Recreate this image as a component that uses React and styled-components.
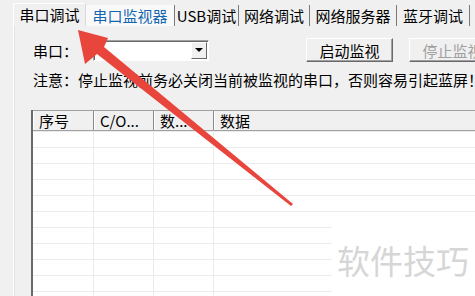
import React from 'react';
import styled, { createGlobalStyle } from 'styled-components';

const GlobalStyle = createGlobalStyle`
  body {
    margin: 0;
    background: #f0f0f0;
    font-family: "Noto Sans CJK SC", "Noto Sans", sans-serif;
  }
`;

const Window = styled.div`
  position: relative;
  width: 475px;
  height: 296px;
  overflow: hidden;
  background: #f0f0f0;
  font-size: 15px;
  color: #000;
`;

const TabStrip = styled.div`
  display: flex;
  align-items: flex-end;
  height: 26px;
  padding-left: 13px;
  white-space: nowrap;
`;

const Tab = styled.div`
  flex: none;
  box-sizing: border-box;
  width: ${props => props.w}px;
  height: ${props => props.active ? 23 : 21}px;
  display: flex;
  align-items: center;
  justify-content: center;
  line-height: 1;
  color: ${props => props.hover ? '#1466b0' : '#000'};
  background: ${props => props.active ? '#f0f0f0' : props.hover ? '#f9f9f9' : 'transparent'};
  border-left: ${props => props.active ? '1px solid #fff' : 'none'};
  border-top: ${props => props.active ? '1px solid #fff' : 'none'};
  border-right: 1px solid ${props => props.active ? '#d8d8d8' : '#7a7a7a'};
  padding-bottom: ${props => props.active ? 2 : 0}px;
`;

const Panel = styled.div`
  margin-left: 13px;
  height: 270px;
  border-left: 1px solid #fff;
  box-shadow: inset 1px 0 0 #e2e2e2;
  padding: 12px 0 0 17px;
  box-sizing: border-box;
`;

const Row = styled.div`
  display: flex;
  align-items: center;
  height: 24px;
  padding-left: 2px;
  white-space: nowrap;
`;

const Label = styled.span`
  width: 60px;
  flex: none;
`;

const Combo = styled.div`
  display: flex;
  box-sizing: border-box;
  width: 116px;
  height: 21px;
  background: #fff;
  border-top: 1px solid #a0a0a0;
  border-left: 1px solid #a0a0a0;
  border-bottom: 1px solid #fff;
  border-right: 1px solid #fff;
  box-shadow: inset 1px 1px 0 #696969;
  flex: none;
`;

const ComboField = styled.div`
  flex: 1;
`;

const DropButton = styled.div`
  width: 16px;
  margin: 1px 1px 1px 0;
  box-sizing: border-box;
  background: #f0f0f0;
  border-top: 1px solid #fff;
  border-left: 1px solid #fff;
  border-right: 1px solid #696969;
  border-bottom: 1px solid #696969;
  display: flex;
  align-items: center;
  justify-content: center;

  &::after {
    content: '';
    border-left: 4px solid transparent;
    border-right: 4px solid transparent;
    border-top: 4px solid #000;
  }
`;

const Button = styled.div`
  flex: none;
  box-sizing: border-box;
  width: 87px;
  height: 24px;
  margin-left: ${props => props.gap}px;
  display: flex;
  align-items: center;
  justify-content: center;
  background: #f0f0f0;
  color: ${props => props.disabled ? '#a0a0a0' : '#000'};
  border-top: 1px solid #fff;
  border-left: 1px solid #fff;
  border-right: 1px solid #696969;
  border-bottom: 1px solid #696969;
  box-shadow: inset -1px -1px 0 #a0a0a0;
`;

const Notice = styled.div`
  margin-top: 8px;
  padding-left: 2px;
  height: 20px;
  line-height: 20px;
  white-space: nowrap;
`;

const Table = styled.div`
  margin-top: 20px;
  width: 460px;
  border-left: 2px solid #6a6a6a;
  background: #fff;
  height: 200px;
`;

const Header = styled.div`
  display: flex;
  height: 21px;
  box-sizing: border-box;
  border-top: 1px solid #a0a0a0;
  border-bottom: 1px solid #a0a0a0;
  background: #f0f0f0;
`;

const HeadCell = styled.div`
  flex: none;
  box-sizing: border-box;
  width: ${props => props.w ? `${props.w}px` : 'auto'};
  flex-grow: ${props => props.w ? 0 : 1};
  padding-left: 5px;
  line-height: 19px;
  border-left: 1px solid #fff;
  border-right: 1px solid #8a8a8a;
  white-space: nowrap;
  overflow: hidden;
`;

const BodyRow = styled.div`
  display: flex;
  height: 16px;
  box-sizing: border-box;
  border-top: 1px solid #ebebeb;
`;

const Cell = styled.div`
  flex: none;
  width: ${props => props.w ? `${props.w}px` : 'auto'};
  flex-grow: ${props => props.w ? 0 : 1};
  box-sizing: border-box;
  border-right: 1px solid ${props => props.w ? '#ebebeb' : 'transparent'};
`;

const Watermark = styled.div`
  position: absolute;
  left: 332px;
  top: 222px;
  width: 143px;
  height: 74px;
  background: #fff;
  color: #d6d6d6;
  font-size: 33px;
  line-height: 1;
  padding: 22px 0 0 5px;
  box-sizing: border-box;
  white-space: nowrap;
`;

const ArrowLayer = styled.svg`
  position: absolute;
  left: 0;
  top: 0;
  pointer-events: none;
`;

const tabs = [
  { label: '串口调试', w: 73, active: true },
  { label: '串口监视器', w: 89, hover: true },
  { label: 'USB调试', w: 64 },
  { label: '网络调试', w: 71 },
  { label: '网络服务器', w: 87 },
  { label: '蓝牙调试', w: 73 },
  { label: '', w: 40 },
];

const columns = [
  { title: '序号', w: 61 },
  { title: 'C/O...', w: 60 },
  { title: '数...', w: 60 },
  { title: '数据' },
];

const rows = Array.from({ length: 11 }, (_, i) => i);

export default function App() {
  return (
    <Window>
      <GlobalStyle />
      <TabStrip>
        {tabs.map(t => (
          <Tab key={t.label + t.w} w={t.w} active={t.active} hover={t.hover}>
            {t.label}
          </Tab>
        ))}
      </TabStrip>
      <Panel>
        <Row>
          <Label>串口：</Label>
          <Combo>
            <ComboField />
            <DropButton />
          </Combo>
          <Button gap={97}>启动监视</Button>
          <Button gap={16} disabled>停止监视</Button>
        </Row>
        <Notice>注意：停止监视前务必关闭当前被监视的串口，否则容易引起蓝屏！</Notice>
        <Table>
          <Header>
            {columns.map(c => (
              <HeadCell key={c.title} w={c.w}>{c.title}</HeadCell>
            ))}
          </Header>
          {rows.map(r => (
            <BodyRow key={r}>
              {columns.map(c => (
                <Cell key={c.title} w={c.w} />
              ))}
            </BodyRow>
          ))}
        </Table>
      </Panel>
      <Watermark>软件技巧</Watermark>
      <ArrowLayer width="475" height="296" viewBox="0 0 475 296">
        <polygon
          points="78,30 108,38 104,47 293,204 291,206 97,54 85,64"
          fill="#e8453c"
        />
      </ArrowLayer>
    </Window>
  );
}
